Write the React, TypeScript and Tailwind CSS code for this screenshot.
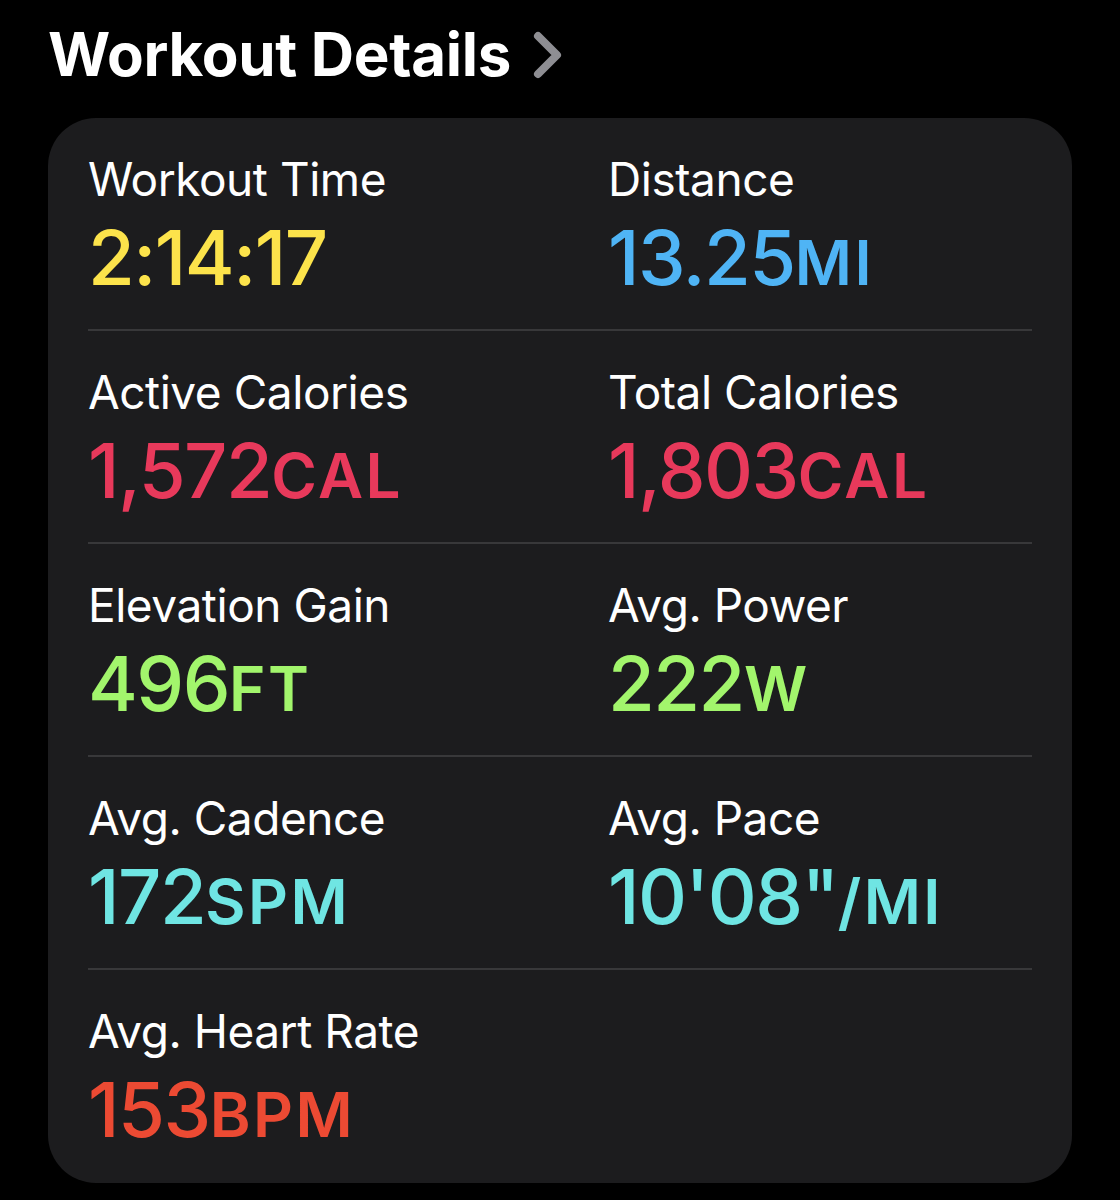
import React from "react";

type Stat = { label: string; value: string; unit: string; color: string };

const rows: Stat[][] = [
  [
    { label: "Workout Time", value: "2:14:17", unit: "", color: "text-[#fce34b]" },
    { label: "Distance", value: "13.25", unit: "MI", color: "text-[#4fb4f5]" },
  ],
  [
    { label: "Active Calories", value: "1,572", unit: "CAL", color: "text-[#e8395b]" },
    { label: "Total Calories", value: "1,803", unit: "CAL", color: "text-[#e8395b]" },
  ],
  [
    { label: "Elevation Gain", value: "496", unit: "FT", color: "text-[#a2f56c]" },
    { label: "Avg. Power", value: "222", unit: "W", color: "text-[#a2f56c]" },
  ],
  [
    { label: "Avg. Cadence", value: "172", unit: "SPM", color: "text-[#6fe5e3]" },
    { label: "Avg. Pace", value: "10'08\"", unit: "/MI", color: "text-[#6fe5e3]" },
  ],
  [{ label: "Avg. Heart Rate", value: "153", unit: "BPM", color: "text-[#ec4a33]" }],
];

function Cell({ s }: { s: Stat }) {
  return (
    <div className="flex flex-col">
      <div className="h-[56px] text-[46px] leading-[56px] text-white font-normal tracking-[-0.01em] whitespace-nowrap">{s.label}</div>
      <div className={`mt-[10px] h-[80px] overflow-visible text-[76px] leading-[80px] font-medium tracking-[-0.02em] whitespace-nowrap ${s.color}`}>
        {s.value}
        {s.unit && <span className="text-[62px] leading-none font-semibold tracking-[0.04em]">{s.unit}</span>}
      </div>
    </div>
  );
}

export default function App() {
  return (
    <div
      className="min-h-[1200px] w-[1120px] bg-black pl-[48px] pt-[24px]"
      style={{ fontFamily: "Inter, 'Noto Sans', sans-serif" }}
    >
      <div className="flex items-center h-[60px]">
        <span className="text-[60px] leading-[60px] font-bold text-white tracking-[-0.005em]">Workout Details</span>
        <svg className="ml-[22px] mt-[2px]" width="30" height="48" viewBox="0 0 30 48">
          <path d="M5 5 L24 24 L5 43" fill="none" stroke="#8e8e93" strokeWidth="8" strokeLinecap="round" strokeLinejoin="round" />
        </svg>
      </div>
      <div className="mt-[34px] w-[1024px] rounded-[48px] bg-[#1c1c1e] px-[40px]">
        {rows.map((r, i) => (
          <div
            key={i}
            className={`grid grid-cols-[520px_1fr] pt-[33px] ${i < rows.length - 1 ? "pb-[32px] border-b-2 border-[#38383a]" : "pb-[34px]"}`}
          >
            {r.map((s, j) => (
              <Cell key={j} s={s} />
            ))}
          </div>
        ))}
      </div>
    </div>
  );
}
